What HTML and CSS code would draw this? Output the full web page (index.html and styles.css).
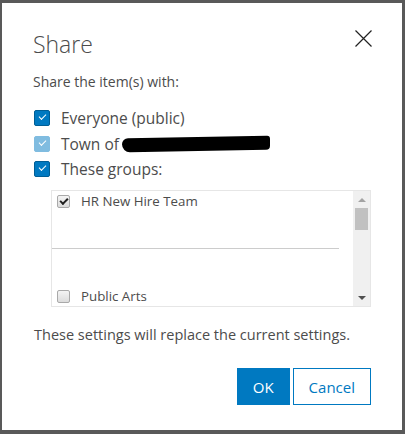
FILE: index.html
```html
<!DOCTYPE html>
<html lang="en">
<head>
  <meta charset="UTF-8">
  <meta name="viewport" content="width=device-width, initial-scale=1.0">
  <title>Share</title>
  <link rel="stylesheet" href="styles.css">
</head>
<body>
  <div class="modal">
    <div class="modal-head">
      <h2>Share</h2>
      <button class="close-btn" aria-label="Close">
        <svg width="17" height="17" viewBox="0 0 17 17"><path d="M0.5 0.5L16.5 16.5M16.5 0.5L0.5 16.5" stroke="#222" stroke-width="1.2" fill="none"/></svg>
      </button>
    </div>

    <p class="lead">Share the item(s) with:</p>

    <div class="opts">
      <label class="opt"><span class="box"></span>Everyone (public)</label>
      <label class="opt"><span class="box muted"></span>Town of <span class="blot"></span></label>
      <label class="opt"><span class="box"></span>These groups:</label>
    </div>

    <div class="groups">
      <div class="group-list">
        <label class="group"><span class="gbox on"></span>HR New Hire Team</label>
        <div class="divider"></div>
        <label class="group"><span class="gbox"></span>Public Arts</label>
      </div>
      <div class="scroll">
        <span class="arrow up"></span>
        <span class="thumb"></span>
        <span class="arrow down"></span>
      </div>
    </div>

    <p class="note">These settings will replace the current settings.</p>

    <div class="actions">
      <button class="btn primary">OK</button>
      <button class="btn">Cancel</button>
    </div>
  </div>
</body>
</html>
```
FILE: styles.css
```css
body {
  margin: 0;
  background-color: #595959;
  font-family: "Open Sans", "Lato", sans-serif;
  color: #4c4c4c;
}
.modal {
  background-color: white;
  margin: 3px 3px 4px 2px;
  height: 427px;
  box-sizing: border-box;
  padding: 0 31px 0 31px;
}
.modal-head {
  display: flex;
  justify-content: space-between;
  align-items: flex-start;
  padding-top: 27px;
}
.modal-head h2 {
  margin: 0;
  font-size: 23px;
  font-weight: 300;
  line-height: 28px;
  color: #4c4c4c;
}
.close-btn {
  background: none;
  border: none;
  padding: 0;
  margin-top: 0;
  margin-right: -1px;
  cursor: pointer;
}
.lead {
  margin: 14px 0 0;
  font-size: 14px;
  line-height: 20px;
}
.opts {
  margin-top: 18px;
  display: flex;
  flex-direction: column;
  gap: 9.5px;
}
.opt {
  display: flex;
  align-items: center;
  gap: 11px;
  font-size: 15.5px;
  line-height: 16px;
  padding-left: 1px;
}
.box {
  width: 16px;
  height: 16px;
  box-sizing: border-box;
  border-radius: 2px;
  background-color: #0079c1;
  border: 1px solid #005e95;
  position: relative;
}
.box::after {
  content: "";
  position: absolute;
  left: 4px;
  top: 3px;
  width: 6px;
  height: 3px;
  border-left: 1.5px solid white;
  border-bottom: 1.5px solid white;
  transform: rotate(-45deg);
}
.box.muted {
  background-color: #80bce0;
  border-color: #80bce0;
}
.blot {
  display: inline-block;
  width: 148px;
  height: 14px;
  margin-left: -8px;
  background-color: black;
  border-radius: 6px 3px 4px 8px;
  transform: skewY(-1deg);
}
.groups {
  margin: 13px 0 0 18px;
  height: 115px;
  border: 1px solid #e6e6e6;
  display: flex;
}
.group-list {
  flex: 1;
  display: flex;
  flex-direction: column;
  padding: 3px 14px 0 2px;
}
.group {
  display: flex;
  align-items: center;
  gap: 11px;
  font-size: 13.3px;
  line-height: 14px;
  padding-left: 3px;
}
.gbox {
  width: 13px;
  height: 13px;
  box-sizing: border-box;
  border: 1px solid #a9a9a9;
  border-radius: 2px;
  background: linear-gradient(#f4f4f4, #dcdcdc);
  position: relative;
}
.gbox.on::after {
  content: "";
  position: absolute;
  left: 2px;
  top: 2px;
  width: 6px;
  height: 3px;
  border-left: 2px solid #222;
  border-bottom: 2px solid #222;
  transform: rotate(-45deg);
}
.divider {
  height: 1px;
  background-color: #cccccc;
  margin: 40px 0 40px -2px;
}
.scroll {
  width: 17px;
  background-color: #f0f0f0;
  display: flex;
  flex-direction: column;
  align-items: center;
  padding: 7px 0 6px;
  box-sizing: border-box;
}
.arrow {
  width: 0;
  height: 0;
  border-left: 4px solid transparent;
  border-right: 4px solid transparent;
}
.arrow.up {
  border-bottom: 4px solid #a3a3a3;
}
.arrow.down {
  border-top: 4px solid #505050;
  margin-top: auto;
}
.thumb {
  width: 13px;
  height: 22px;
  background-color: #c1c1c1;
  margin-top: 6px;
}
.note {
  margin: 19px 0 0 1px;
  font-size: 14.5px;
  line-height: 18px;
}
.actions {
  display: flex;
  justify-content: flex-end;
  gap: 3px;
  margin-top: 24px;
}
.btn {
  font-family: inherit;
  font-size: 15px;
  height: 37px;
  padding: 0 15px;
  border: 1px solid #0079c1;
  background-color: white;
  color: #0079c1;
  cursor: pointer;
}
.btn.primary {
  background-color: #0079c1;
  color: white;
}
```
